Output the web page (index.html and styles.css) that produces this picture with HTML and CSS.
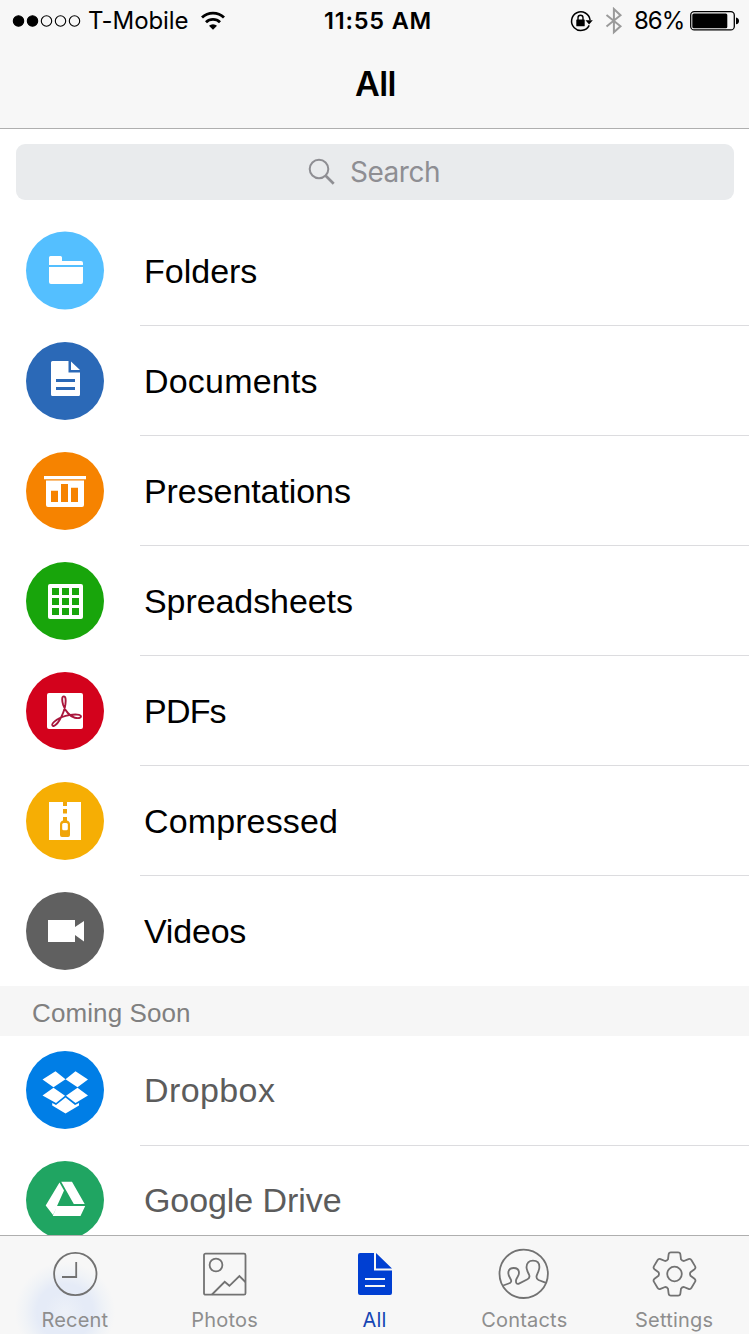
FILE: index.html
```html
<!DOCTYPE html>
<html lang="en">
<head>
<meta charset="utf-8">
<title>All</title>
<link rel="stylesheet" href="styles.css">
</head>
<body>
<div class="screen">
  <header class="header">
    <div class="status">
      <div class="status-left">
        <svg class="signal" width="70" height="16" viewBox="0 0 70 16"><g stroke="#000" stroke-width="1.100"><circle cx="6.500" cy="8" r="5.200"/><circle cx="20.500" cy="8" r="5.200"/><g fill="none"><circle cx="34.500" cy="8" r="5.200"/><circle cx="48.500" cy="8" r="5.200"/><circle cx="62.500" cy="8" r="5.200"/></g></g></svg>
        <span class="carrier">T-Mobile</span>
        <svg class="wifi" width="26" height="20" viewBox="0 0 26 20"><g fill="none" stroke="#000" stroke-width="2.800"><path d="M2 6.600a15.600 15.600 0 0 1 22 0"/><path d="M6 11.200a10 10 0 0 1 14 0"/></g><path d="M9 14.800a5.800 5.800 0 0 1 8 0l-4 4z"/></svg>
      </div>
      <span class="time">11:55 AM</span>
      <div class="status-right">
        <svg width="26" height="24" viewBox="0 0 26 24"><path d="M20.200 16.300a9.300 9.300 0 1 1 .9-5.200" fill="none" stroke="#000" stroke-width="1.500"/><path d="M16.500 11.300h7.300l-3.700 4.200z"/><rect x="7.300" y="10.500" width="8.400" height="6.800" rx=".6"/><path d="M9 11V8.700a2.500 2.500 0 0 1 5 0V11" fill="none" stroke="#000" stroke-width="1.400"/></svg>
        <svg class="bluetooth" width="18" height="28" viewBox="0 0 18 28"><path d="M1.500 8l14 11.300-6.600 6V2l6.600 6.200-14 11.300" fill="none" stroke="#9a9a9a" stroke-width="2"/></svg>
        <span class="percent">86%</span>
        <svg class="battery" width="50" height="20" viewBox="0 0 50 20"><rect x=".7" y=".7" width="43.600" height="18.200" rx="3.500" fill="none" stroke="#000" stroke-width="1.300"/><rect x="2.300" y="2.400" width="35" height="14.800" rx="1.500"/><path d="M46 6.500q3 .6 3 3.400t-3 3.400z"/></svg>
      </div>
    </div>
    <h1 class="title">All</h1>
  </header>
  <div class="search">
    <svg width="28" height="28" viewBox="0 0 28 28"><g fill="none" stroke="#8e8e93" stroke-width="2"><circle cx="11" cy="11" r="9.300"/><path d="M17.700 17.700l8 8" stroke-width="2.700"/></g></svg>
    <span class="search-label">Search</span>
  </div>
  <main class="list">
    <div class="row"><svg class="icon" viewBox="0 0 78 78"><circle cx="39" cy="38.500" r="39" fill="#54bfff"/><path fill="#fff" d="M23 33v-7.500q0-1.500 1.500-1.500h10q1.500 0 1.500 1.500V29h19q2 0 2 2v2zM23 35h34v15q0 2-2 2H25q-2 0-2-2z"/></svg><div class="cell t-folders">Folders</div></div>
    <div class="row"><svg class="icon" viewBox="0 0 78 78"><circle cx="39" cy="39" r="39" fill="#2b69b7"/><path fill="#fff" d="M26.500 19H42.500v11.500H54V52.500q0 1.500-1.500 1.500h-26q-1.500 0-1.500-1.500v-32q0-1.500 1.500-1.500zM45 19.500l9 8.500h-9z"/><path d="M30 38.500h19M30 46.500h19" stroke="#2b69b7" stroke-width="3"/></svg><div class="cell t-documents">Documents</div></div>
    <div class="row"><svg class="icon" viewBox="0 0 78 78"><circle cx="39" cy="39" r="39" fill="#f68300"/><path fill="#fff" d="M18 24h42v3.200H18zM20 28.500h38V53q0 2-2 2H22q-2 0-2-2z"/><path fill="#f68300" d="M25 38.700h7V50h-7zM35 32h7v18h-7zM45 35.700h7V50h-7z"/></svg><div class="cell t-presentations">Presentations</div></div>
    <div class="row"><svg class="icon" viewBox="0 0 78 78"><circle cx="39" cy="39" r="39" fill="#18a50b"/><rect x="22" y="22" width="35" height="35" rx="2" fill="#fff"/><path fill="#18a50b" d="M26 26h7v7h-7zM36 26h7v7h-7zM46 26h7v7h-7zM26 36h7v7h-7zM36 36h7v7h-7zM46 36h7v7h-7zM26 46h7v7h-7zM36 46h7v7h-7zM46 46h7v7h-7z"/></svg><div class="cell t-spreadsheets">Spreadsheets</div></div>
    <div class="row"><svg class="icon" viewBox="0 0 78 78"><circle cx="39" cy="39" r="39" fill="#d3021c"/><rect x="21" y="21" width="36" height="36" rx="2" fill="#fff"/><path d="M37.800 24.400c-2.300 0-1.800 4.600-.6 8.600 1.800 5.500 6.700 11.600 11.600 12.700 3.600.8 6.200.3 6.200-1.200 0-2.300-6.300-2.300-11.800-1.400-4.600.8-9.300 2.500-12.400 4.700-3 2.100-5.200 4.400-4.400 5.600 1.300 1.800 4.400-.8 7.200-5.500 2.900-4.900 5.200-11.100 5.800-15.600.5-4 .5-7.900-1.600-7.900z" fill="none" stroke="#a9163c" stroke-width="1.900"/></svg><div class="cell t-pdfs">PDFs</div></div>
    <div class="row"><svg class="icon" viewBox="0 0 78 78"><circle cx="39" cy="39" r="39" fill="#f6ae04"/><path fill="#fff" d="M23 20h32v38H23z"/><path fill="#f0a50a" d="M37 20h4v4h-4zM37 27h4v4.500h-4zM37 35h4v3.500q3 .8 3 4V53q0 2-2 2h-6q-2 0-2-2V42.500q0-3.200 3-4z"/><rect x="36.200" y="41" width="5.600" height="7.300" rx="1.500" fill="#fff"/></svg><div class="cell t-compressed">Compressed</div></div>
    <div class="row row-last"><svg class="icon" viewBox="0 0 78 78"><circle cx="39" cy="39" r="39" fill="#606060"/><path fill="#fff" d="M22 28h27v7l9-6v20.500L49 43v7H22z"/></svg><div class="cell t-videos">Videos</div></div>
    <h2 class="section">Coming Soon</h2>
    <div class="row row-soon"><svg class="icon" viewBox="0 0 78 78"><circle cx="39" cy="39" r="39" fill="#007ee6"/><path fill="#fff" d="M29.500 20.300l10 8-12 8-11-7.800zM49.500 20.300l12.500 8.200-10.500 7.800-12-8zM27.500 36.700l11.500 8-9 7.300-13.500-7.500zM51.500 36.700L62 44.500 49.500 52 40 44.700zM26.200 52l3.800 2 9.500-7.500 9.500 7.500 4-2v2.500l-13.500 8-13.300-8z"/></svg><div class="cell t-dropbox">Dropbox</div></div>
    <div class="row row-soon"><svg class="icon" viewBox="0 0 78 78"><circle cx="39" cy="39" r="39" fill="#20a562"/><path fill="#fff" d="M33.500 21.500L38 29.500 27 54 19.700 44.500zM35.200 20.700H46L58.700 43H47.800zM31 45h28.200l-4.700 10H26.800z"/></svg><div class="cell t-drive">Google Drive</div></div>
  </main>
  <nav class="tabs">
    <div class="tab"><svg viewBox="0 0 52 52"><g fill="none" stroke="#727272" stroke-width="1.800"><circle cx="26.300" cy="26" r="21.200"/><path d="M27.200 14v15H13"/></g></svg><span class="l-recent">Recent</span></div>
    <div class="tab"><svg viewBox="0 0 52 52"><g fill="none" stroke="#727272" stroke-width="1.800"><rect x="5" y="5.700" width="41.500" height="41" rx="1.500"/><circle cx="17" cy="17" r="6.400"/><path d="M13 46.500l12.700-12.700 4.700 4L40.400 28l6 6"/></g></svg><span class="l-photos">Photos</span></div>
    <div class="tab tab-active"><svg viewBox="0 0 52 52"><path fill="#003fd2" d="M12 5h14v17.500h18V45q0 2-2 2H12q-2 0-2-2V7q0-2 2-2zM28 5l16 15.500H28z"/><path d="M17 31h20M17 38h20" stroke="#f7f7f7" stroke-width="2"/></svg><span class="l-all">All</span></div>
    <div class="tab"><svg viewBox="0 0 52 52"><g fill="none" stroke="#727272" stroke-width="1.800"><circle cx="25.700" cy="25.800" r="24.200"/><path d="M5.200 37.500L10.700 35.500C13.300 34.700 13.800 33 12.600 31C11 28.500 10.300 27.500 10.300 25.300C10.300 21.800 12.400 20 15.700 20C19 20 21 21.800 21 25C21 28 18.500 29.500 18 32.500C17.800 35 18.800 36.400 20.500 35.800L29.500 31.200C31.500 30.200 32 28.800 31 26.500C29.800 24 28.500 22 28.500 19.300C28.500 15 31 12.700 34.900 12.700C38.800 12.700 41.400 15 41.400 19C41.400 23 39 25.500 38.500 28.500C38.300 30.500 39 31.200 40.500 32L48 34.900"/></g></svg><span class="l-contacts">Contacts</span></div>
    <div class="tab"><svg viewBox="-26.500 -26 52 52"><g fill="none" stroke="#727272" stroke-width="1.800" stroke-linejoin="round"><circle r="7.300"/><path d="M-6.500-14.700L-5.900-19.500Q-5.700-21.700-3.500-21.700H3.500Q5.700-21.700 5.900-19.500L6.500-14.700Q7.500-13 9.400-13L14-14.900Q15.900-15.700 17-13.800L20.500-7.900Q21.600-6 20-4.700L16-1.700Q15 0 16 1.700L20 4.700Q21.600 6 20.500 7.900L17 13.800Q15.900 15.700 14 14.900L9.400 13Q7.500 13 6.500 14.700L5.900 19.500Q5.700 21.700 3.500 21.700H-3.500Q-5.700 21.700-5.900 19.500L-6.500 14.700Q-7.500 13-9.400 13L-14 14.900Q-15.900 15.700-17 13.800L-20.500 7.900Q-21.600 6-20 4.700L-16 1.700Q-15 0-16-1.700L-20-4.700Q-21.600-6-20.500-7.900L-17-13.800Q-15.900-15.700-14-14.900L-9.400-13Q-7.500-13-6.500-14.700z"/></g></svg><span class="l-settings">Settings</span></div>
  </nav>
</div>
</body>
</html>
```
FILE: styles.css
```css
* { box-sizing: border-box; margin: 0; }
body { background: #fff; font-family: Inter, "Liberation Sans", sans-serif; color: #000; }
svg { display: block; flex: none; }
.screen { width: 749px; height: 1334px; display: flex; flex-direction: column; overflow: hidden; }

.header { flex: none; height: 129px; background: #f7f7f7; border-bottom: 1px solid #afafaf; }
.status { height: 41px; display: grid; grid-template-columns: 324px 1fr 179px; align-items: center; font-size: 24px; line-height: 42px; white-space: nowrap; }
.status-left, .status-right { display: flex; align-items: center; }
.status-left { padding-left: 12px; }
.carrier { width: 100px; margin-left: 6px; letter-spacing: -0.1px; }
.wifi { margin-left: 12px; }
.time { font-weight: 600; font-size: 23.500px; letter-spacing: 0.800px; }
.status-right svg:first-child { margin-left: -1px; }
.bluetooth { margin-left: 10px; }
.percent { width: 49px; margin-left: 11px; letter-spacing: -1px; }
.battery { margin-left: 7px; }
.title { font-size: 34px; font-weight: 600; line-height: 40px; text-align: center; margin-top: 23px; padding-left: 2px; letter-spacing: -0.500px; }

.search { flex: none; height: 56px; margin: 15px 15px 0 16px; border-radius: 9px; background: #e9ebed; display: flex; align-items: center; justify-content: center; gap: 14px; font-size: 28px; color: #8e8e93; }
.search-label { letter-spacing: -0.500px; }
.search svg { margin-left: -2px; }

.list { flex: none; margin-top: 16px; height: 1019px; overflow: hidden; font-family: "Liberation Sans", Arial, sans-serif; }
.row { height: 110px; display: flex; padding-left: 26px; }
.icon { width: 78px; height: 78px; margin-top: 16px; overflow: visible; }
.cell { flex: 1; margin-left: 36px; padding-left: 4px; border-bottom: 1px solid #dcdcdf; font-size: 34px; line-height: 111px; white-space: nowrap; }
.t-documents { letter-spacing: 0.200px; }
.t-presentations, .t-spreadsheets, .t-drive { letter-spacing: -0.080px; }
.t-pdfs { letter-spacing: -0.800px; }
.t-compressed { letter-spacing: 0.120px; }
.t-videos { letter-spacing: -0.200px; }
.t-dropbox { letter-spacing: 0.400px; }
.row-last .cell { border-bottom-color: transparent; }
.row-soon .icon { margin-top: 15px; }
.row-soon .cell { color: #5c5c5c; line-height: 109px; }
.section { height: 50px; padding-left: 32px; background: #f6f6f6; color: #808080; font-size: 26px; font-weight: 400; line-height: 54px; letter-spacing: 0.100px; }

.tabs { flex: none; height: 99px; display: grid; grid-template-columns: repeat(5, 1fr); border-top: 1px solid #afafaf; color: #8e8e8e; font-size: 20px; background: radial-gradient(circle at 65px 76px, #edf1f8 0, #e5ebf7 20px, #e5ebf7 28px, #f0f3f7 40px, #f7f7f7 50px) #f7f7f7; }
.tab { display: flex; flex-direction: column; align-items: center; padding-top: 12px; line-height: 24px; letter-spacing: 0.200px; }
.tab svg { width: 52px; height: 52px; }
.tab span { margin-top: 8px; }
.tab-active { color: #1646b4; }
```
